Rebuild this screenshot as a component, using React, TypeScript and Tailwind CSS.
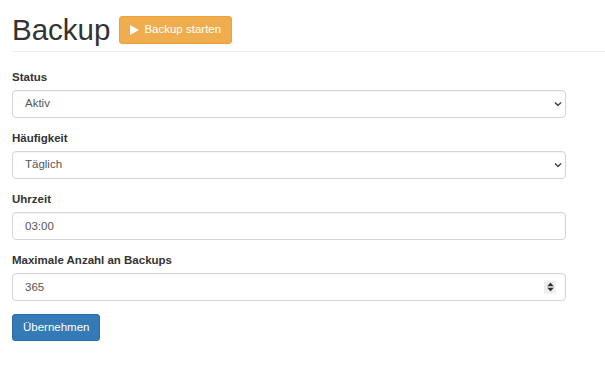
import React from "react";

const Chevron = () => (
  <svg className="pointer-events-none absolute right-[4px] top-1/2 -translate-y-1/2" width="8" height="5" viewBox="0 0 8 5">
    <path d="M1 1l3 3l3-3" fill="none" stroke="#444" strokeWidth="1.5" />
  </svg>
);

const Spinner = () => (
  <div className="pointer-events-none absolute right-[10px] top-1/2 flex h-[13px] w-[12px] -translate-y-1/2 flex-col items-center justify-center gap-[1px] bg-[#eeeeee]">
    <svg width="7" height="4" viewBox="0 0 7 4"><path d="M0 4L3.5 0L7 4Z" fill="#333" /></svg>
    <svg width="7" height="4" viewBox="0 0 7 4"><path d="M0 0L3.5 4L7 0Z" fill="#333" /></svg>
  </div>
);

const fieldCls =
  "block h-[28px] w-full rounded-[4px] border border-[#d5d5d5] bg-white pl-[12px] pr-[12px] text-[11.5px] text-[#555] outline-none appearance-none shadow-[inset_0_1px_1px_rgba(0,0,0,0.04)]";

const Label = ({ children }: { children: React.ReactNode }) => (
  <label className="mb-[4px] block text-[11.5px] font-bold leading-[17px] text-[#333]">{children}</label>
);

export default function App() {
  return (
    <div className="min-h-[376px] w-[605px] bg-white pl-[12px] text-[#333]" style={{ fontFamily: '"Liberation Sans", Arial, sans-serif' }}>
      <div className="flex items-center gap-[9px] border-b border-[#eeeeee] pb-[7px] pt-[15px]">
        <h1 className="text-[29.5px] font-normal leading-[29px] text-[#333]">Backup</h1>
        <button className="flex h-[28px] items-center gap-[5px] rounded-[3px] border border-[#eea236] bg-[#f0ad4e] px-[10px] text-[11.5px] text-white">
          <svg width="9" height="10" viewBox="0 0 9 10"><path d="M0 0L9 5L0 10Z" fill="white" /></svg>
          Backup starten
        </button>
      </div>
      <div className="w-[554px] pt-[17px]">
        <div className="mb-[12px]">
          <Label>Status</Label>
          <div className="relative">
            <select className={fieldCls} defaultValue="aktiv">
              <option value="aktiv">Aktiv</option>
              <option value="inaktiv">Inaktiv</option>
            </select>
            <Chevron />
          </div>
        </div>
        <div className="mb-[12px]">
          <Label>Häufigkeit</Label>
          <div className="relative">
            <select className={fieldCls} defaultValue="t">
              <option value="t">Täglich</option>
              <option value="w">Wöchentlich</option>
            </select>
            <Chevron />
          </div>
        </div>
        <div className="mb-[12px]">
          <Label>Uhrzeit</Label>
          <input className={fieldCls} defaultValue="03:00" />
        </div>
        <div className="mb-[13px]">
          <Label>Maximale Anzahl an Backups</Label>
          <div className="relative">
            <input className={fieldCls} defaultValue="365" />
            <Spinner />
          </div>
        </div>
        <button className="h-[27px] rounded-[3px] border border-[#2e6da4] bg-[#337ab7] px-[10px] text-[11.5px] text-white">
          Übernehmen
        </button>
      </div>
    </div>
  );
}
